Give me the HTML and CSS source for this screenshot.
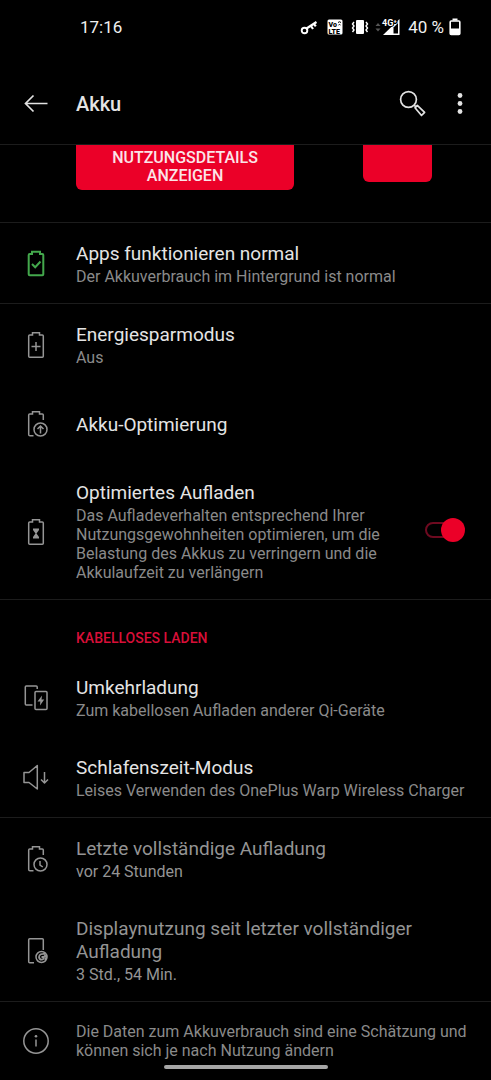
FILE: index.html
```html
<!DOCTYPE html>
<html lang="de">
<head>
<meta charset="utf-8">
<meta name="viewport" content="width=device-width, initial-scale=1">
<title>Akku</title>
<link rel="stylesheet" href="styles.css">
</head>
<body>
<div class="status">
  <span class="status-text">17:16</span>
  <div class="status-icons">
    <svg width="18" height="18" viewBox="0 0 18 18" fill="none" stroke="#fff"><circle cx="4.500" cy="12.500" r="2.800" stroke-width="1.900"/><path d="M6.500 10.500 16.500 4M11 8l2 3M14 6l1.800 2.400" stroke-width="2.200"/></svg>
    <svg width="16" height="16" viewBox="0 0 16 16"><rect x="0.5" y="0.5" width="15" height="15" rx="1.5" fill="#fff"/><text x="1.5" y="7.5" class="glyph">Vo</text><path d="M11 3.5q1.5-1.5 3 0M11.5 6q1-1 2 0" fill="none" stroke="#000"/><text x="1.5" y="14.5" class="glyph">LTE</text></svg>
    <svg width="18" height="16" viewBox="0 0 18 16" fill="none" stroke="#fff" stroke-width="1.4"><rect x="5" y="1" width="8" height="14" rx="1" fill="#fff" stroke="none"/><path d="M3 3 1.500 5l1.500 2-1.500 2 1.500 2-1.500 2M15 3l1.500 2L15 7l1.500 2-1.500 2 1.500 2"/></svg>
    <svg width="26" height="18" viewBox="0 0 26 18"><path d="M0.500 8 3 5l2.500 3zM0.500 10.500h5L3 13.500z" fill="#555"/><path d="M8 17 24.500 1v16z" fill="#fff"/><path d="M18.500 9.500 23 5v10.500h-4.500z" fill="#000"/><text x="7" y="8" class="net">4G⁺</text></svg>
  </div>
  <span class="status-text">40 %</span>
  <svg class="cell" width="12" height="18" viewBox="0 0 12 18"><path d="M3.500 0.500h5v2H3.500z" fill="#fff"/><rect x="1.200" y="3" width="9.600" height="13.500" rx="1" fill="none" stroke="#fff" stroke-width="1.600"/><path d="M1 10.500h10v6H1z" fill="#fff"/></svg>
</div>
<header class="appbar">
  <button class="icon-button back" aria-label="Zurück"><svg width="24" height="24" viewBox="0 0 24 24" fill="none" stroke="#e2e2e2" stroke-width="1.700"><path d="M23.500 11.500H1.500M9.500 3.500l-8 8 8 8"/></svg></button>
  <h1>Akku</h1>
  <button class="icon-button" aria-label="Suchen"><svg width="28" height="28" viewBox="0 0 28 28" fill="none" stroke="#e2e2e2" stroke-width="1.700"><circle cx="9.500" cy="9.500" r="7.900"/><path d="m15.100 15.100 1.600 1.600M16 17.800l2.300-2.500 7.300 7.100-3.100 3.100z" stroke-linejoin="round"/></svg></button>
  <button class="icon-button" aria-label="Weitere Optionen"><svg width="8" height="24" viewBox="0 0 8 24" fill="#e2e2e2"><circle cx="4" cy="3.500" r="2.400"/><circle cx="4" cy="11.500" r="2.400"/><circle cx="4" cy="19.500" r="2.400"/></svg></button>
</header>
<main>
  <section class="actions">
    <button class="action details">NUTZUNGSDETAILS ANZEIGEN</button>
    <button class="action short" aria-label="Akku"></button>
  </section>

  <section class="group">
    <div class="row">
      <svg class="icon good" viewBox="0 0 28 28"><path d="M10 4V1.700h8V4h2.300q1 0 1 1v19.300q0 1-1 1H7.700q-1 0-1-1V5q0-1 1-1z"/><path d="m10 14 3.200 3.200 5.300-5.700" stroke-width="2"/></svg>
      <div class="copy"><h2>Apps funktionieren normal</h2><p>Der Akkuverbrauch im Hintergrund ist normal</p></div>
    </div>
  </section>

  <section class="group">
    <div class="row">
      <svg class="icon" viewBox="0 0 28 28"><path d="M10.500 4V1.700h7V4h2.800q1 0 1 1v20.300q0 1-1 1H7.700q-1 0-1-1V5q0-1 1-1z"/><path d="M14 11v9M9.500 15.500h9"/></svg>
      <div class="copy"><h2>Energiesparmodus</h2><p>Aus</p></div>
    </div>
    <div class="row single">
      <svg class="icon" viewBox="0 0 28 28"><path d="M11.500 25.800H8q-1.300 0-1.300-1.300V5q0-1 1-1h2.800V1.700h7V4h2.800q1 0 1 1v5"/><circle cx="18.500" cy="19.500" r="6.500"/><path d="M18.500 23.500v-7M15.500 19l3-3 3 3"/></svg>
      <div class="copy"><h2>Akku-Optimierung</h2></div>
    </div>
    <div class="row">
      <svg class="icon" viewBox="0 0 28 28"><path d="M10.500 4V1.700h7V4h2.800q1 0 1 1v20.300q0 1-1 1H7.700q-1 0-1-1V5q0-1 1-1z"/><path d="M11 10.500h6v1.500l-2.500 3.500 2.500 3.500v1.500h-6V19l2.500-3.500L11 12z" fill="#959595" stroke="none"/></svg>
      <div class="copy"><h2><label for="charge">Optimiertes Aufladen</label></h2><p>Das Aufladeverhalten entsprechend Ihrer Nutzungsgewohnheiten optimieren, um die Belastung des Akkus zu verringern und die Akkulaufzeit zu verlängern</p></div>
      <input class="switch" type="checkbox" role="switch" id="charge" checked>
    </div>
  </section>

  <section class="group">
    <h3>KABELLOSES LADEN</h3>
    <div class="row">
      <svg class="icon" viewBox="0 0 28 28"><path d="M10.500 21H4.300q-1 0-1-1V3q0-1 1-1h9.900q1 0 1 1v2"/><rect x="13" y="7.500" width="12" height="18" rx="1"/><path d="m20 11.500-4.500 6h2.800L18 21.500l4.200-6h-2.700z" fill="#959595" stroke="none"/></svg>
      <div class="copy"><h2>Umkehrladung</h2><p>Zum kabellosen Aufladen anderer Qi-Geräte</p></div>
    </div>
    <div class="row">
      <svg class="icon" viewBox="0 0 28 28"><path d="M2 8.500h5L15.300 1.500v23.500L7 18.500H2zM22.500 8v10.700M19 15.500l3.500 3.500 3.500-3.500" stroke-linejoin="round"/></svg>
      <div class="copy"><h2>Schlafenszeit-Modus</h2><p>Leises Verwenden des OnePlus Warp Wireless Charger</p></div>
    </div>
  </section>

  <section class="group">
    <div class="row muted">
      <svg class="icon" viewBox="0 0 28 28"><path d="M11.500 25.800H8q-1.300 0-1.300-1.300V5q0-1 1-1h2.800V1.700h7V4h2.800q1 0 1 1v5"/><circle cx="18.500" cy="19.500" r="6.500"/><path d="M18 16v4l2.800 2"/></svg>
      <div class="copy"><h2>Letzte vollständige Aufladung</h2><p>vor 24 Stunden</p></div>
    </div>
    <div class="row muted">
      <svg class="icon" viewBox="0 0 28 28"><path d="M12 25.800H7.700q-1 0-1-1V2.700q0-1 1-1h12.600q1 0 1 1V13"/><circle cx="19.500" cy="20" r="5.500"/><path d="M23.500 17q-6-1-6.500 3 .5 3 3 2.600 2-.3 2-2.600h-2.500M21 16l3.300 4-1 3" stroke-width="1.800"/></svg>
      <div class="copy"><h2>Displaynutzung seit letzter vollständiger Aufladung</h2><p>3 Std., 54 Min.</p></div>
    </div>
  </section>

  <section class="row note">
    <svg class="icon" viewBox="0 0 28 28"><circle cx="14" cy="14" r="12.200"/><path d="M14 12.500v7"/><circle cx="14" cy="9.300" r="1.300" fill="#959595" stroke="none"/></svg>
    <div class="copy"><p>Die Daten zum Akkuverbrauch sind eine Schätzung und können sich je nach Nutzung ändern</p></div>
  </section>
</main>
<div class="home"></div>
</body>
</html>
```
FILE: styles.css
```css
* { box-sizing: border-box; }
body {
  margin: 0;
  background: #000;
  color: #e4e4e4;
  font-family: Roboto, "Noto Sans", sans-serif;
}
h1, h2, h3, p { margin: 0; }
button { border: 0; padding: 0; font-family: inherit; }
svg { display: block; flex: none; }

.status {
  display: flex;
  align-items: center;
  height: 54px;
  padding: 0 30px 0 80px;
}
.status-text { font-size: 17px; line-height: 20px; color: #f0f0f0; }
.status-icons { display: flex; align-items: center; gap: 8px; margin: 0 7px 0 auto; }
.cell { margin-left: 5px; }
.glyph { font: 900 7px Roboto, sans-serif; fill: #000; }
.net { font: 700 9px Roboto, sans-serif; fill: #fff; stroke: #000; stroke-width: 2px; paint-order: stroke; }
.status-icons svg:first-child { margin-right: 1px; }
.status-icons svg:last-child { margin-left: -2px; }

.appbar {
  display: flex;
  align-items: center;
  height: 91px;
  padding: 10px 27px 0 24px;
  border-bottom: 1px solid #1c1c1c;
}
.icon-button { background: none; }
.back { margin-right: 28px; }
.appbar h1 { flex: 1; font-size: 20px; line-height: 24px; font-weight: 500; }
.appbar .icon-button + .icon-button { margin-left: 29px; }

.actions {
  display: flex;
  align-items: flex-start;
  justify-content: space-between;
  height: 78px;
  padding: 0 59px 0 76px;
  border-bottom: 1px solid #1c1c1c;
}
.action {
  background: #eb0028;
  color: #fbe4e8;
  border-radius: 0 0 6px 6px;
  font-size: 16px;
  line-height: 18px;
  font-weight: 500;
}
.details { width: 218px; padding: 4px 30px 5px; }
.short { width: 69px; height: 37px; }

.group { border-bottom: 1px solid #1c1c1c; }
.row {
  display: flex;
  align-items: center;
  padding: 19px 24px 17px 22px;
}
.single { min-height: 78px; }
.icon {
  width: 28px;
  height: 28px;
  margin-right: 26px;
  fill: none;
  stroke: #959595;
  stroke-width: 1.5px;
}
.good { stroke: #43a84c; stroke-width: 2px; }
.copy { flex: 1; }
h2 { font-size: 19px; line-height: 23px; font-weight: 400; }
p { font-size: 16px; line-height: 19px; color: #8a8a8a; }
h2 + p { margin-top: 2px; }
h3 {
  padding: 28px 24px 9px 76px;
  font-size: 14px;
  line-height: 20px;
  font-weight: 500;
  color: #d80f38;
}
.muted h2, .muted p { color: #949494; }
.note { padding-top: 20px; }

.switch {
  appearance: none;
  display: flex;
  align-items: center;
  justify-content: flex-end;
  flex: none;
  width: 36px;
  height: 16px;
  margin: 0 6px 4px 14px;
  border: 2px solid #6e0a20;
  border-radius: 8px;
}
.switch::after {
  content: "";
  flex: none;
  width: 24px;
  height: 24px;
  margin-right: -6px;
  border-radius: 50%;
  background: #eb0028;
}
.home {
  position: fixed;
  bottom: 11px;
  left: 50%;
  width: 164px;
  height: 4px;
  margin-left: -82px;
  border-radius: 2px;
  background: #a6a6a6;
}
```
